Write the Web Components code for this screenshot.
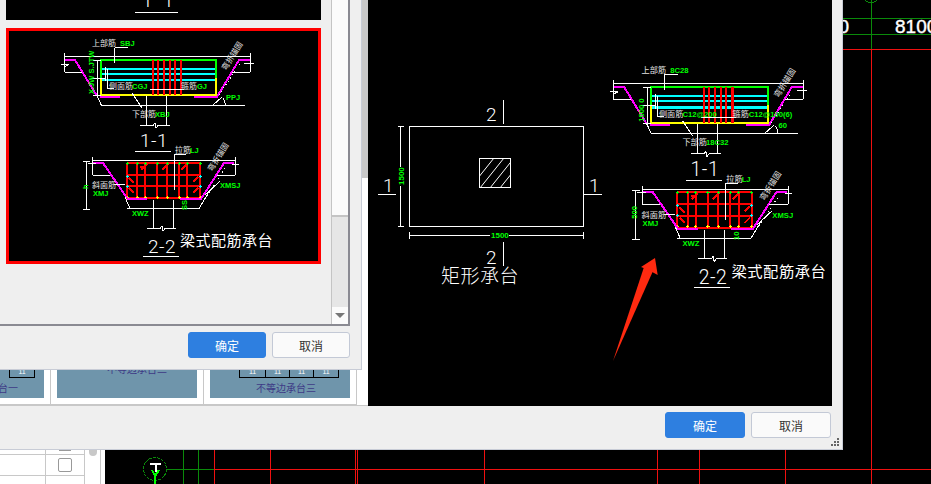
<!DOCTYPE html>
<html>
<head>
<meta charset="utf-8">
<title>承台配筋</title>
<style>
  html, body { margin: 0; height: 100%; background: #000; overflow: hidden; }
</style>
</head>
<body>
<cad-desktop>
  <param-window>
    <thumb-gallery slot="gallery"></thumb-gallery>
    <preview-pane slot="preview"></preview-pane>
    <dlg-button slot="buttons" primary wide>确定</dlg-button>
    <dlg-button slot="buttons" wide>取消</dlg-button>
    <select-dialog slot="dialog">
      <section-card></section-card>
      <beam-card></beam-card>
      <dlg-button slot="buttons" primary>确定</dlg-button>
      <dlg-button slot="buttons">取消</dlg-button>
    </select-dialog>
  </param-window>
  <side-table></side-table>
</cad-desktop>

<script>
const CJK = `"Noto Sans CJK SC", "Liberation Sans", sans-serif`;

// Text helper for the drawings
function txt(x, y, str, cls, extra = '') {
    return `<text x="${x}" y="${y}" class="${cls}" ${extra}>${str}</text>`;
}

const drawingCSS = `
    svg { display: block; }
    path, polyline, line, rect { shape-rendering: crispEdges; fill: none; }
    text { font-family: ${CJK}; }
    .w { stroke: #fff; stroke-width: 1; }
    .g { stroke: #0f0; stroke-width: 2; }
    .y { stroke: #ff0; stroke-width: 2; }
    .c { stroke: #0ff; stroke-width: 2; }
    .m { stroke: #f0f; stroke-width: 2; }
    .r { stroke: #f00; stroke-width: 2; }
    .lb { fill: #e4e4e4; font-size: 8px; }
    .gt { fill: #0f0; font-size: 7.5px; font-family: "Liberation Sans", sans-serif; font-weight: 700; }
    .num { fill: #fff; font-size: 19px; font-weight: 300; letter-spacing: .5px; font-family: Roboto, "Liberation Sans", sans-serif; }
    .ttl { fill: #fff; font-size: 15px; letter-spacing: .5px; }
`;

// Beam style pile cap, two sections. Coordinates are those of the thumbnail on screen.
function beamDrawing(l) {
    const plus = (pts, color) => pts.map(([x, y]) =>
        `<path d="M${x - 1.5} ${y}h3M${x} ${y - 1.5}v3" style="stroke:${color};stroke-width:1"/>`).join('');
    const topX = [127, 137, 145, 157, 167, 179, 187, 200];
    return `
    <path class="c" d="M102 69H215M102 74H215M102 80H215"/>
    <path class="g" d="M101 78V60H216V78"/>
    <path class="y" d="M101 78V95H216V78"/>
    <path class="r" d="M153 60V95M158 60V95M164 60V95M170 60V95M175 60V95M181 60V95"/>
    <path class="m" d="M65 60H75L97 96M100 97H120M194 97H217L239 60H250"/>
    <path class="w" d="M64.5 53V72M64.5 56.5H250.5M250.5 53V72M64.5 72.5H82M232 72.5H250M61 64.5H69L64 67M244 63.5H254"/>
    <path class="w" d="M97 96L101.5 105.5H245M213 105L222 97M223 98Q225 101 225.5 105"/>
    <path class="w" d="M97.5 60V95M93 60.5H101M93 95.5H101M91 78.5H106M105.5 67V81M107.5 69V88.5H114"/>
    <path class="w" d="M114.5 47.5H128M114.5 47.5V63M132 93L142 108"/>
    <path class="w" d="M150 89.5H184M146.5 96V125M166.5 96V125M140 125.5H153L155 123L156 128L158 125.5H170M135 151.5H171"/>
    <path class="w" stroke-dasharray="1 3" d="M219 95L241 62"/>
    ${txt(92, 46, '上部筋', 'lb')}${txt(120, 46, l.sbj, 'gt')}
    ${txt(109, 89, '侧面筋', 'lb')}${txt(132, 89, l.cgj, 'gt')}
    ${txt(181, 89, '箍筋', 'lb')}${txt(197, 89, l.gj, 'gt')}
    ${txt(132, 117, '下部筋', 'lb')}${txt(155, 117, l.xbj, 'gt')}
    ${txt(226, 100, l.ppj, 'gt')}
    ${txt(0, 0, l.side, 'gt', 'transform="translate(94 94) rotate(-90)"')}
    ${txt(0, 0, '弯折锚固', 'lb', 'transform="translate(226 71) rotate(-58)"')}
    ${txt(140, 147, '1-1', 'num')}

    <path class="r" d="${topX.map(x => `M${x} 163V199`).join('')}M127 163H200M127 175H200M127 186H200M127 198H200"/>
    <path class="r" d="M141 170L147 164M140 167H146M162 170L168 164M181 170L187 164M129 178L134 183M129 188L134 193M198 177L193 182M198 188L193 193"/>
    ${plus(topX.map(x => [x, 163]), '#0f0')}
    ${plus([[127, 176], [127, 186], [200, 176], [200, 186]], '#0ff')}
    ${plus(topX.map(x => [x, 197]), '#ff0')}
    <path class="m" d="M93 163H103L127 198M127 199H147M180 199H201L224 163H234"/>
    <path class="w" d="M92.5 157V175M92.5 160.5H235.5M235.5 157V175M92.5 175.5H110M217 175.5H235M232 164.5H239M88 163H96"/>
    <path class="w" d="M86.5 161V209M83 161.5H90M83 209.5H90M125 197L130 208.5H199L210 190M205 195L220 181"/>
    <path class="w" d="M174.5 154V190M174.5 154.5H186M114 184.5H125M127 208.5H149M153.5 200V228M173.5 200V228"/>
    <path class="w" d="M147 228.5H160L162 226L163 231L165 228.5H176M143 256.5H179"/>
    <path class="w" stroke-dasharray="1 3" d="M207 196L226 167"/>
    ${txt(175, 153, '拉筋', 'lb')}${txt(190, 153, 'LJ', 'gt')}
    ${txt(92, 188, '斜面筋', 'lb')}${txt(93, 196, 'XMJ', 'gt')}
    ${txt(220, 188, 'XMSJ', 'gt')}${txt(132, 216, 'XWZ', 'gt')}
    ${txt(0, 0, l.ss, 'gt', 'transform="translate(187 210) rotate(-90)"')}
    ${txt(0, 0, l.h, 'gt', 'transform="translate(88 189) rotate(-90)"')}
    ${txt(0, 0, '弯折锚固', 'lb', 'transform="translate(212 172) rotate(-58)"')}
    ${txt(148, 253, '2-2', 'num')}
    ${txt(180, 246, '梁式配筋承台', 'ttl')}`;
}

function createTemplate(html) {
    const template = document.createElement('template');
    template.innerHTML = html;
    return template;
}

// Plain element: clones its template into an open shadow root
function defineElement(tag, template) {
    customElements.define(tag, class extends HTMLElement {
        constructor() {
            super();
            this.attachShadow({ mode: 'open' });
            this.shadowRoot.appendChild(template.content.cloneNode(true));
        }
    });
}

// Desktop: the black CAD canvas with the windows over it
defineElement('cad-desktop', createTemplate(`
    <style>
        :host { display: block; position: relative; width: 931px; height: 484px; overflow: hidden; background: #000; }
        svg { position: absolute; left: 0; top: 0; }
        path, circle { fill: none; shape-rendering: crispEdges; }
        text { font-family: "Liberation Sans", sans-serif; font-size: 19px; fill: #fff; stroke: #fff; stroke-width: .4; }
    </style>
    <svg width="931" height="484" viewBox="0 0 931 484">
        <path stroke="#0a8a0a" d="M842 18.5H931M842 34.5H931M871.5 0V49M183.5 449V484M198.5 449V484M167 469.5H214"/>
        <path stroke="#0a8a0a" d="M865 0Q871 6 877 0"/>
        <path stroke="#f01010" d="M842 49.5H931M871.5 49V484M214.5 449V484M270.5 449V484M355.5 449V484M357.5 449V484M484.5 449V484M657.5 449V484M699.5 449V484M785.5 449V484M214 469.5H931"/>
        <text x="849" y="33" text-anchor="end">8100</text>
        <text x="895" y="33">8100</text>
        <circle cx="155" cy="469" r="11.5" stroke="#0a8a0a" stroke-dasharray="3 1"/>
        <path stroke="#fff" stroke-width="2" d="M150 464H161M155.5 464V472"/>
        <path stroke="#0f0" stroke-width="2" d="M152 470L155 476L159 470M155 476V484"/>
    </svg>
    <slot></slot>
`));

// Outer parameter window
defineElement('param-window', createTemplate(`
    <style>
        :host { display: grid; grid-template-columns: 368px 464px; grid-template-rows: 406px 43px;
                position: absolute; left: 0; top: 0; width: 842px; height: 449px;
                background: #efefef;
                border-right: 1px solid #c8ccd6; border-bottom: 1px solid #c8ccd6; }
        .foot { grid-column: 1 / 3; display: flex; justify-content: flex-end; gap: 6px; padding-top: 6px; margin-right: 1px; }
        .grip { position: absolute; right: 3px; bottom: 3px; width: 8px; height: 8px; }
    </style>
    <slot name="gallery"></slot>
    <slot name="preview"></slot>
    <div class="foot"><slot name="buttons"></slot></div>
    <svg class="grip" viewBox="0 0 8 8" fill="#666">
        <rect x="6" y="0" width="2" height="2"/><rect x="3" y="3" width="2" height="2"/><rect x="6" y="3" width="2" height="2"/>
        <rect x="0" y="6" width="2" height="2"/><rect x="3" y="6" width="2" height="2"/><rect x="6" y="6" width="2" height="2"/>
    </svg>
    <slot name="dialog"></slot>
`));

// Inner window that covers most of the gallery
defineElement('select-dialog', createTemplate(`
    <style>
        :host { position: absolute; left: 0; top: 0; width: 361px; height: 369px; display: flex; flex-direction: column;
                background: #efefef; border-right: 1px solid #c8ccd6; border-bottom: 1px solid #c8ccd6; }
        .pane { display: flex; width: 350px; height: 326px; box-sizing: border-box; flex: none;
                border-right: 2px solid #8a8a92; border-bottom: 2px solid #8a8a92; }
        .list { width: 332px; box-sizing: border-box; padding-left: 6px; display: flex; flex-direction: column; gap: 8px; overflow: hidden; }
        .foot { display: flex; justify-content: flex-end; gap: 6px; padding: 6px 11px 0 0; }
    </style>
    <div class="pane">
        <div class="list"><slot></slot></div>
        <dlg-scrollbar></dlg-scrollbar>
    </div>
    <div class="foot"><slot name="buttons"></slot></div>
`));

defineElement('dlg-scrollbar', createTemplate(`
    <style>
        :host { display: grid; grid-template-rows: 217px 1fr 17px; width: 16px; background: #e6e6e6; border-left: 1px solid #c4c4c4; }
        .thumb { background: #fbfbfb; border-bottom: 2px solid #c4c4c4; }
        .down { background: #fbfbfb; display: flex; align-items: center; justify-content: center; }
        .down i { width: 0; height: 0; border: 5px solid transparent; border-top: 5px solid #777; border-bottom: 0; }
    </style>
    <div class="thumb"></div><div></div><div class="down"><i></i></div>
`));

// Section card cut by the top of the list
defineElement('section-card', createTemplate(`
    <style>
        :host { display: block; width: 315px; height: 20px; background: #000; flex: none; }
        ${drawingCSS}
    </style>
    <svg width="315" height="20" viewBox="6 0 315 20">
        <path class="w" d="M135 12.5H178"/>
        <text x="142" y="7" class="num">1</text>
        <text x="163" y="7" class="num">1</text>
    </svg>
`));

// Selected card with the beam drawing
class BeamCard extends HTMLElement {
    constructor() {
        super();
        this.attachShadow({ mode: 'open' });
        this.shadowRoot.innerHTML = `
            <style>
                :host { display: block; width: 315px; height: 236px; box-sizing: border-box; background: #000; border: 3px solid #f00; flex: none; }
                ${drawingCSS}
            </style>
            <svg width="309" height="230" viewBox="9 31 309 230">
                ${beamDrawing({ sbj: 'SBJ', cgj: 'CGJ', gj: 'GJ', xbj: 'XBJ', ppj: 'PPJ', side: 'X.JW  S.JTW', ss: 'SS', h: 'h' })}
            </svg>`;
    }
}
customElements.define('beam-card', BeamCard);

// Big preview on the right of the outer window
class PreviewPane extends HTMLElement {
    constructor() {
        super();
        this.attachShadow({ mode: 'open' });
        const hatch = [470, 480, 490, 500, 510].map(b => `M${b} 188L${b + 24} 158`).join('');
        this.shadowRoot.innerHTML = `
            <style>
                :host { display: block; background: #000; }
                ${drawingCSS}
                .big { fill: #fff; font-size: 19px; font-weight: 300; letter-spacing: .5px; }
                .hatch { shape-rendering: auto; }
                .gtb { fill: #0f0; font-size: 8px; font-family: "Liberation Sans", sans-serif; font-weight: 700; }
            </style>
            <svg width="464" height="406" viewBox="368 0 464 406">
                <defs><clipPath id="sq"><rect x="480" y="159" width="31" height="29"/></clipPath></defs>
                <rect class="w" x="409.5" y="126.5" width="174" height="100"/>
                <rect class="w" x="479.5" y="158.5" width="31" height="29"/>
                <path class="w hatch" clip-path="url(#sq)" d="${hatch}"/>
                <path class="w" d="M503.5 100V124M503.5 242V266M378 194.5H396M584 194.5H602"/>
                <path class="w" d="M400.5 126V227M398 126.5H404M398 226.5H404M409 235.5H584M409 232V239M583 232V239"/>
                <rect x="396" y="167" width="9" height="19" style="fill:#000"/>
                <rect x="490" y="231" width="19" height="9" style="fill:#000"/>
                <text class="gtb" transform="translate(403.5 185) rotate(-90)">1500</text>
                <text class="gtb" x="491" y="238">1500</text>
                ${txt(486, 121, '2', 'num')}${txt(486, 264, '2', 'num')}
                ${txt(383, 192, '1', 'num')}${txt(589, 192, '1', 'num')}
                ${txt(441, 283, '矩形承台', 'big')}
                <g transform="translate(547.6 25.9) scale(1.0215 1.02)">
                    ${beamDrawing({ sbj: '8C28', cgj: 'C12@200', gj: 'C12@100(6)', xbj: '18C32', ppj: '60', side: '1800    0', ss: '10', h: '500' })}
                </g>
                <polygon fill="#ff2a10" points="655,258 641,267 644.3,268.3 651.7,271.7 657.7,275" />
                <polygon fill="#ff2a10" points="613,361 644,267 653,271" />
            </svg>`;
    }
}
customElements.define('preview-pane', PreviewPane);

// Gallery behind the inner window: only the bottom of the thumbnails shows
defineElement('thumb-gallery', createTemplate(`
    <style>
        :host { display: flex; align-items: flex-end; height: 406px; box-sizing: border-box; width: 368px; overflow: hidden;
                background: #fff linear-gradient(#c8c8c8 178px, #fff 178px) no-repeat right top / 6px 100%;
                border-bottom: 1px solid #c8c8c8; }
        .row { display: grid; grid-template-columns: 153px 153px 153px; flex: none; margin-left: -102px; }
    </style>
    <div class="row">
        <thumb-card label="不等边承台一" textx="54" ticks="105.5,130.5"></thumb-card>
        <thumb-card label="不等边承台二" textx="50" texty="3"></thumb-card>
        <thumb-card label="不等边承台三" textx="46" ticks="29.5,55.5,79.5,103.5,128.5"></thumb-card>
    </div>
`));

class ThumbCard extends HTMLElement {
    connectedCallback() {
        const root = this.attachShadow({ mode: 'open' });
        const ticks = (this.getAttribute('ticks') || '').split(',').filter(Boolean).map(Number);
        const textX = this.getAttribute('textx');
        const textY = this.getAttribute('texty') || 22;
        let dims = '';
        if (ticks.length) {
            dims = `<path d="M${ticks[0]} 7.5H${ticks[ticks.length - 1]}${ticks.map(t => `M${t} 0V8`).join('')}" stroke="#000" shape-rendering="crispEdges"/>`;
            for (let i = 0; i < ticks.length - 1; i++) {
                dims += `<text x="${(ticks[i] + ticks[i + 1]) / 2 - 3.5}" y="4" class="n">11</text>`;
            }
        }
        root.innerHTML = `
            <style>
                :host { display: block; width: 153px; height: 35px; box-sizing: border-box; padding: 0 7px 7px 6px;
                        background: #fff; border-right: 1px solid #c8c8c8; border-bottom: 1px solid #c8c8c8; }
                svg { display: block; background: #6f95ab; }
                text { font-family: ${CJK}; font-size: 10px; fill: #3e3a86; }
                .n { font-family: "Liberation Sans", sans-serif; font-size: 7px; fill: #fff; }
            </style>
            <svg width="140" height="28" viewBox="0 0 140 28">
                ${dims}
                <text x="${textX}" y="${textY}">${this.getAttribute('label')}</text>
            </svg>`;
    }
}
customElements.define('thumb-card', ThumbCard);

// Blue and white dialog buttons
class DlgButton extends HTMLElement {
    constructor() {
        super();
        this.attachShadow({ mode: 'open' });
        this.shadowRoot.innerHTML = `
            <style>
                :host { display: flex; align-items: center; justify-content: center; box-sizing: border-box;
                        width: 78px; height: 26px; border-radius: 3px; font: 12px ${CJK};
                        background: #fafafa; color: #333; border: 1px solid #c3c9d6; }
                :host([wide]) { width: 80px; }
                :host([primary]) { background: #2e7fe0; color: #fff; border-color: #2e7fe0; }
            </style>
            <slot></slot>`;
    }
}
customElements.define('dlg-button', DlgButton);

// Table peeking out below the window, bottom left
defineElement('side-table', createTemplate(`
    <style>
        :host { position: absolute; left: 0; top: 450px; width: 105px; height: 34px; display: grid;
                grid-template-columns: 46px 39px 16px 4px; grid-template-rows: 5px 21px 8px; background: #fff; }
        div { box-sizing: border-box; border-right: 1px solid #c8c8c8; border-bottom: 1px solid #c8c8c8; }
        .dash { display: flex; justify-content: center; }
        .dash i { display: block; width: 12px; height: 1px; background: #999; }
        .box { display: flex; align-items: center; justify-content: center; }
        .box i { display: block; width: 14px; height: 14px; box-sizing: border-box; border: 1px solid #999; border-radius: 2px; }
        .bar { grid-column: 3; grid-row: 1 / 4; border-bottom: 0; display: flex; justify-content: center; }
        .bar i { display: block; width: 8px; height: 6px; background: #c8c8c8; border-radius: 0 0 4px 4px; }
        .end { grid-column: 4; grid-row: 1 / 4; border: 0; }
        .last { border-bottom: 0; }
    </style>
    <div></div><div class="dash"><i></i></div><div class="bar"><i></i></div><div class="end"></div>
    <div></div><div class="box"><i></i></div>
    <div class="last"></div><div class="last"></div>
`));
</script>
</body>
</html>
